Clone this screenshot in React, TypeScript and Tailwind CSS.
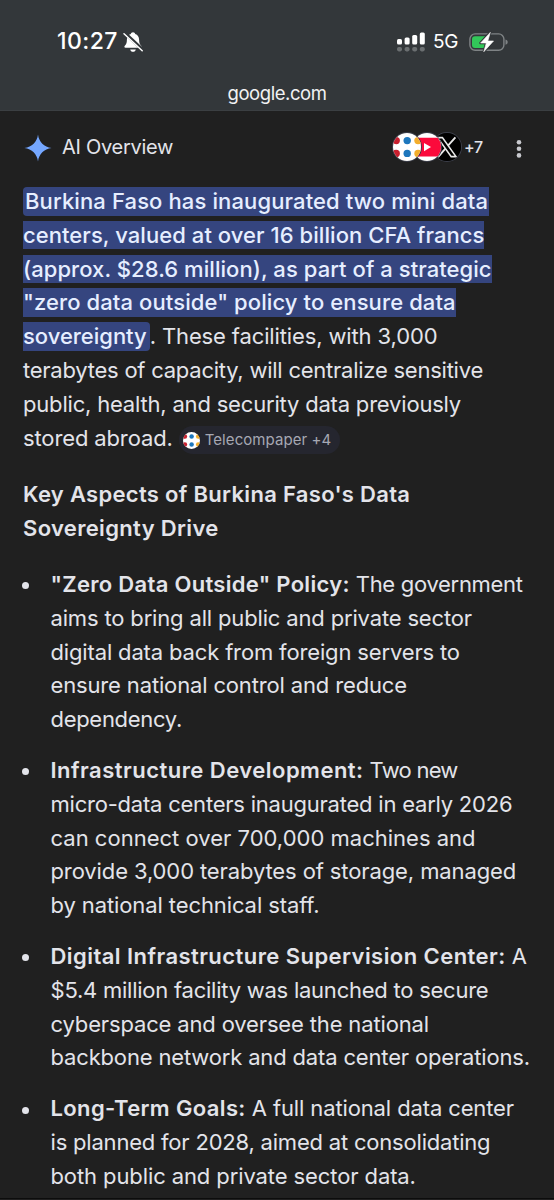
import React from 'react';

interface TextPart {
  text: string;
  className: string;
}

interface BulletItem {
  id: string;
  lines: TextPart[][];
}

const highlighted: TextPart[] = [
  { text: 'Burkina Faso has inaugurated two mini data', className: 'tracking-[0.12px] rounded-l-[4px] pl-[2px] pr-px' },
  { text: 'centers, valued at over 16 billion CFA francs', className: 'tracking-[0.06px]' },
  { text: '(approx. $28.6 million), as part of a strategic', className: 'tracking-[0.06px]' },
  { text: '"zero data outside" policy to ensure data', className: 'tracking-[0.1px]' },
];

const intro: TextPart[] = [
  { text: 'terabytes of capacity, will centralize sensitive', className: 'tracking-[-0.24px]' },
  { text: 'public, health, and security data previously', className: 'tracking-[-0.19px]' },
];

const bullets: BulletItem[] = [
  {
    id: 'policy',
    lines: [
      [
        { text: '"Zero Data Outside" Policy:', className: 'font-semibold tracking-[0.3px]' },
        { text: 'The government', className: 'tracking-[-0.3px]' },
      ],
      [{ text: 'aims to bring all public and private sector', className: 'tracking-[-0.16px]' }],
      [{ text: 'digital data back from foreign servers to', className: 'tracking-[-0.15px]' }],
      [{ text: 'ensure national control and reduce', className: 'tracking-[-0.15px]' }],
      [{ text: 'dependency.', className: 'tracking-[-0.3px]' }],
    ],
  },
  {
    id: 'infrastructure',
    lines: [
      [
        { text: 'Infrastructure Development:', className: 'font-semibold tracking-[0.48px]' },
        { text: 'Two new', className: 'tracking-[-0.75px]' },
      ],
      [{ text: 'micro-data centers inaugurated in early 2026', className: 'tracking-[-0.22px]' }],
      [{ text: 'can connect over 700,000 machines and', className: 'tracking-[0.01px]' }],
      [{ text: 'provide 3,000 terabytes of storage, managed', className: 'tracking-[-0.11px]' }],
      [{ text: 'by national technical staff.', className: 'tracking-[-0.1px]' }],
    ],
  },
  {
    id: 'supervision',
    lines: [
      [
        { text: 'Digital Infrastructure Supervision Center:', className: 'font-semibold tracking-[0.44px]' },
        { text: 'A', className: '' },
      ],
      [{ text: '$5.4 million facility was launched to secure', className: 'tracking-[-0.24px]' }],
      [{ text: 'cyberspace and oversee the national', className: 'tracking-[-0.15px]' }],
      [{ text: 'backbone network and data center operations.', className: 'tracking-[-0.16px]' }],
    ],
  },
  {
    id: 'goals',
    lines: [
      [
        { text: 'Long-Term Goals:', className: 'font-semibold tracking-[0.37px]' },
        { text: 'A full national data center', className: 'tracking-[-0.12px]' },
      ],
      [{ text: 'is planned for 2028, aimed at consolidating', className: 'tracking-[-0.2px]' }],
      [{ text: 'both public and private sector data.', className: 'tracking-[-0.1px]' }],
    ],
  },
];

const DotsLogo: React.FC<{ className: string }> = ({ className }) => (
  <svg viewBox="0 0 28 28" className={className}>
    <defs>
      <clipPath id="dots-clip">
        <circle cx="14" cy="14" r="14" />
      </clipPath>
    </defs>
    <g clipPath="url(#dots-clip)">
      <rect width="28" height="28" fill="#fff" />
      <circle cx="3.2" cy="7.6" r="3.7" fill="#c8202f" />
      <circle cx="14.2" cy="7.6" r="3.7" fill="#1d77bd" />
      <circle cx="25" cy="7.6" r="3.7" fill="#f3ae2c" />
      <circle cx="3.2" cy="20.4" r="3.7" fill="#c8202f" />
      <circle cx="14.2" cy="20.4" r="3.7" fill="#1d77bd" />
      <circle cx="25" cy="20.4" r="3.7" fill="#f3ae2c" />
    </g>
  </svg>
);

const YoutubeLogo: React.FC = () => (
  <svg viewBox="0 0 28 28" className="size-[28px] rounded-full">
    <rect width="28" height="28" fill="#fff" />
    <rect x="0" y="4.8" width="28" height="18.6" rx="3.5" fill="#fb0a3b" />
    <path d="M11 10v8.2l7-4.1z" fill="#fff" />
  </svg>
);

const XLogo: React.FC = () => (
  <svg viewBox="0 0 28 28" className="size-[28px] rounded-full">
    <rect width="28" height="28" fill="#000" />
    <path d="M4.6 4.6h4.800l13.600 19H18.200z" fill="none" stroke="#e8e8e8" strokeWidth="1.6" />
    <path d="M22.400 4.400l-7.400 8.200M12.400 15.600L5 24" stroke="#e8e8e8" strokeWidth="1.9" />
  </svg>
);

const StatusBar: React.FC = () => (
  <div className="flex h-[32px] items-center pl-[57px] pr-[45px] text-white">
    <span className="text-[23px] font-medium tracking-[0.45px]">10:27</span>
    {/* Silent mode */}
    <svg viewBox="0 0 20 22" className="ml-[5px] mt-px h-[22px] w-[20px]">
      <path
        d="M10 1.3c1.2 0 2 .7 2.2 1.7 2.6.8 3.9 3 3.9 5.8 0 3.4.8 4.7 2.1 6 .8.8.5 2-.7 2H2.5c-1.2 0-1.5-1.2-.7-2 1.3-1.3 2.1-2.6 2.1-6 0-2.8 1.3-5 3.9-5.8C8 2 8.8 1.3 10 1.3z"
        fill="#fff"
      />
      <path d="M7.2 18.4h5.6c-.3 1.5-1.4 2.3-2.8 2.3s-2.5-.8-2.8-2.3z" fill="#fff" />
      <path d="M1.4 1.8L19.8 18.8" stroke="#33373a" strokeWidth="3.4" />
      <path d="M1 2.8L19.2 19.7" stroke="#fff" strokeWidth="1.5" strokeLinecap="round" />
    </svg>
    <svg viewBox="0 0 28 20" className="ml-auto h-[20px] w-[28px]">
      <rect x="0" y="7" width="5" height="5.5" rx="1.5" fill="#fff" />
      <rect x="7.6" y="5.5" width="5" height="7" rx="1.5" fill="#fff" />
      <rect x="15.2" y="3" width="5" height="9.5" rx="1.5" fill="#fff" />
      <rect x="22.8" y=".5" width="5" height="12" rx="1.5" fill="#fff" />
      <g fill="#6b6f71">
        <rect x="0" y="15" width="5" height="4.4" rx="1.8" />
        <rect x="7.6" y="15" width="5" height="4.4" rx="1.8" />
        <rect x="15.2" y="15" width="5" height="4.4" rx="1.8" />
        <rect x="22.8" y="15" width="5" height="4.4" rx="1.8" />
      </g>
    </svg>
    <span className="ml-[8px] mt-[2px] w-[28px] text-[19px] tracking-[-0.2px]">5G</span>
    <svg viewBox="0 0 40 22" className="ml-[8px] h-[22px] w-[40px]">
      <rect x=".9" y="2.9" width="34" height="16.4" rx="5.2" fill="none" stroke="#7f8385" strokeWidth="1.4" />
      <path d="M6 5.2h11v11.8H6a3 3 0 0 1-3-3V8.2a3 3 0 0 1 3-3z" fill="#32c759" />
      <path d="M36.5 8.4c1.5.4 2.2 1.4 2.2 2.7s-.7 2.300-2.200 2.700z" fill="#7f8385" />
      <path d="M21.3 1.4L11.6 12h5.7l-2.5 8.700L24.500 10h-5.700z" fill="#fff" stroke="#33373a" strokeWidth="2.600" strokeLinejoin="round" />
      <path d="M21.300 1.400L11.600 12h5.700l-2.500 8.700L24.500 10h-5.700z" fill="#fff" stroke="#fff" strokeWidth=".6" strokeLinejoin="round" />
    </svg>
  </div>
);

const Line: React.FC<{ parts: TextPart[] }> = ({ parts }) => (
  <div className="flex gap-[6px] whitespace-nowrap">
    {parts.map((part) => (
      <span key={part.text} className={part.className}>
        {part.text}
      </span>
    ))}
  </div>
);

export default function App() {
  return (
    <div className="h-[1200px] w-[554px] overflow-hidden bg-[#202020] font-['Inter',sans-serif] text-[#e3e4ea]">
      <header className="h-[111px] border-b border-[#3b3f42] bg-[#33373a] pt-[25.5px]">
        <StatusBar />
        <div className="mt-[22px] text-center text-[18.5px] leading-[26px] tracking-[-0.45px] text-[#f1f2f3]">google.com</div>
      </header>

      <main className="h-[1088px] border-b border-[#0c0c0c]">
        <div className="flex h-[72px] items-center pl-[24px] pr-[32px]">
          <svg viewBox="0 0 28 28" className="mt-px size-[28px]">
            <path d="M14 .5c.8 7.300 6.200 12.700 13.500 13.500C20.200 14.800 14.800 20.200 14 27.500 13.200 20.200 7.800 14.800.5 14 7.800 13.200 13.200 7.800 14 .5z" fill="#75a7ff" />
          </svg>
          <span className="ml-[10px] text-[20px] tracking-[-0.28px]">AI Overview</span>
          <div className="ml-auto flex items-center">
            <div className="z-20 rounded-full ring-1 ring-[#3b3e4a]">
              <DotsLogo className="size-[28px]" />
            </div>
            <div className="z-10 -ml-[8px] rounded-full ring-1 ring-[#3b3e4a]">
              <YoutubeLogo />
            </div>
            <div className="-ml-[8px] rounded-full ring-1 ring-[#3b3e4a]">
              <XLogo />
            </div>
            <span className="ml-[3px] w-[21px] text-[16px] font-medium tracking-[-0.4px]">+7</span>
          </div>
          <svg viewBox="0 0 6 20" className="ml-[31px] mt-[4px] h-[20px] w-[6px]">
            <circle cx="3" cy="3.2" r="2.3" fill="#c8c9ce" />
            <circle cx="3" cy="9.8" r="2.3" fill="#c8c9ce" />
            <circle cx="3" cy="16.4" r="2.3" fill="#c8c9ce" />
          </svg>
        </div>

        <div className="px-[23px] pt-[2.3px] text-[22px] leading-[33.8px]">
          <div className="whitespace-nowrap">
            {highlighted.map((line) => (
              <div key={line.text}>
                <span className={`bg-[#35457f] py-[1.3px] font-medium text-[#e6eeff] ${line.className}`}>{line.text}</span>
              </div>
            ))}
            <div>
              <span className="rounded-r-[4px] bg-[#35457f] py-[1.3px] pr-[3px] font-medium tracking-[-0.02px] text-[#e6eeff]">sovereignty</span>
              <span className="tracking-[-0.13px]">. These facilities, with 3,000</span>
            </div>
            {intro.map((line) => (
              <div key={line.text} className={line.className}>
                {line.text}
              </div>
            ))}
            <div className="flex h-[33.8px] items-center">
              <span className="tracking-[-0.13px]">stored abroad.</span>
              <span className="ml-[6px] mt-[3px] flex h-[28px] items-center rounded-full bg-[#25262f] pl-[4px] pr-[9px] text-[15px] leading-[20px] text-[#a6a8b3]">
                <DotsLogo className="mr-[5px] size-[17px]" />
                <span className="tracking-[0.08px]">Telecompaper +4</span>
              </span>
            </div>
          </div>

          <h2 className="mt-[22.3px] whitespace-nowrap font-semibold">
            <span className="block tracking-[0.31px]">Key Aspects of Burkina Faso's Data</span>
            <span className="block tracking-[0.34px]">Sovereignty Drive</span>
          </h2>

          <ul className="mt-[22.4px] space-y-[17px]">
            {bullets.map((item) => (
              <li key={item.id} className="flex">
                <span className="mt-[14.5px] ml-[-1.5px] mr-[22px] size-[7px] shrink-0 rounded-full bg-[#e3e4ea]" />
                <div>
                  {item.lines.map((parts) => (
                    <Line key={parts[0].text} parts={parts} />
                  ))}
                </div>
              </li>
            ))}
          </ul>
        </div>
      </main>
    </div>
  );
}
